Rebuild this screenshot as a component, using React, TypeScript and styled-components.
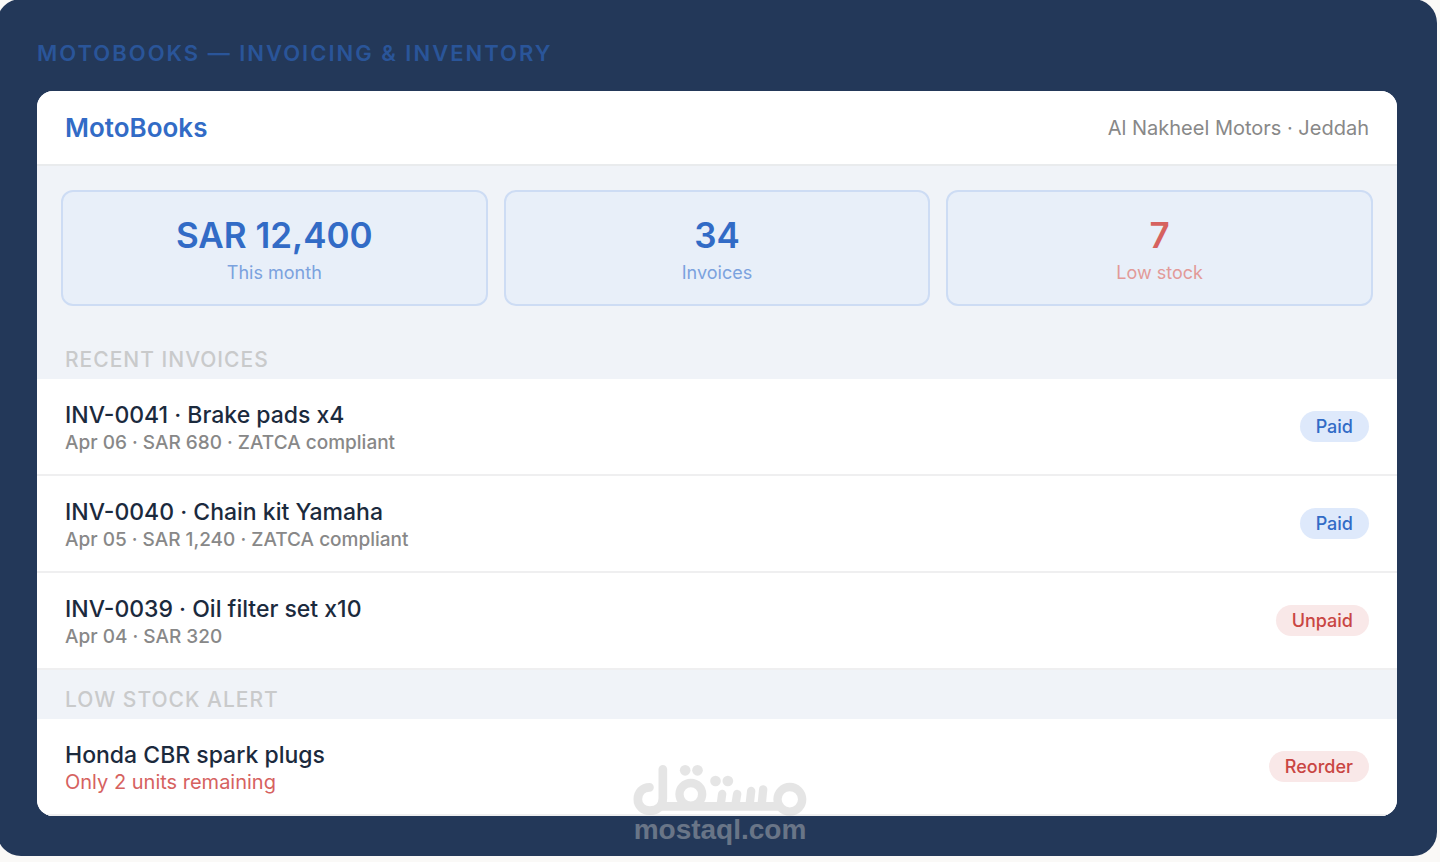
import React from "react";
import styled, { createGlobalStyle } from "styled-components";

const GlobalStyle = createGlobalStyle`
  * { box-sizing: border-box; }
  body {
    margin: 0;
    background: #faf9f7;
    font-family: Inter, "Liberation Sans", sans-serif;
    overflow-x: hidden;
  }
  h1, h2, h3, p, ul, dl, dd { margin: 0; padding: 0; }
`;

type Tone = "blue" | "red";

const Page = styled.div`
  position: relative;
  overflow: hidden;
`;

const Frame = styled.main`
  margin: -1px 3px 0 -3px;
  padding: 37px 40px 40px;
  border-radius: 24px;
  background: #233859;
`;

const Caption = styled.h1`
  margin-bottom: 21px;
  font-size: 22px;
  line-height: 34px;
  font-weight: 600;
  letter-spacing: 2px;
  text-transform: uppercase;
  color: #2a5599;
`;

const Card = styled.section`
  overflow: hidden;
  border-radius: 16px;
  background: #f0f3f8;
`;

const Header = styled.header`
  display: flex;
  align-items: center;
  justify-content: space-between;
  padding: 20px 28px;
  border-bottom: 2px solid #e9ebed;
  background: #ffffff;
`;

const Brand = styled.h2`
  font-size: 26px;
  line-height: 33px;
  font-weight: 600;
  color: #326bc6;
`;

const Shop = styled.p`
  font-size: 20px;
  line-height: 26px;
  color: #888888;
`;

const Stats = styled.dl`
  display: grid;
  grid-template-columns: repeat(3, 1fr);
  gap: 16px;
  padding: 24px;
`;

const Stat = styled.div`
  display: flex;
  flex-direction: column-reverse;
  padding: 20px 20px 16px;
  border: 2px solid #cddcf4;
  border-radius: 12px;
  background: #e8eff9;
  text-align: center;
`;

const StatValue = styled.dd<{ $tone: Tone }>`
  font-size: 35px;
  line-height: 46px;
  font-weight: 600;
  color: ${({ $tone }) => ($tone === "red" ? "#d6625f" : "#326bc6")};
`;

const StatLabel = styled.dt<{ $tone: Tone }>`
  font-size: 18px;
  line-height: 30px;
  color: ${({ $tone }) => ($tone === "red" ? "#e29a98" : "#7ba2de")};
`;

const SectionTitle = styled.h3`
  padding: 17px 28px 7px;
  font-size: 21px;
  line-height: 25px;
  font-weight: 500;
  letter-spacing: 1px;
  text-transform: uppercase;
  color: #c9cacb;
`;

const Rows = styled.ul`
  list-style: none;
`;

const Row = styled.li`
  display: flex;
  align-items: center;
  justify-content: space-between;
  padding: 19px 28px;
  border-bottom: 2px solid #efeff0;
  background: #ffffff;
`;

const RowText = styled.div`
  padding-top: 2px;
`;

const RowTitle = styled.p`
  font-size: 23px;
  line-height: 30px;
  font-weight: 500;
  color: #1b2a3d;
`;

const RowNote = styled.p`
  font-size: 19px;
  line-height: 25px;
  font-weight: 500;
  color: #888888;
`;

const AlertNote = styled(RowNote)`
  font-size: 20px;
  font-weight: 400;
  color: #d6625f;
`;

const Badge = styled.span<{ $tone: Tone }>`
  padding: 4px 16px;
  border: 0;
  border-radius: 20px;
  font-family: inherit;
  font-size: 18px;
  line-height: 23px;
  font-weight: 500;
  color: ${({ $tone }) => ($tone === "red" ? "#c94643" : "#326bc6")};
  background: ${({ $tone }) => ($tone === "red" ? "#f9e8e8" : "#dee9fb")};
`;

const Watermark = styled.div`
  position: absolute;
  left: 50%;
  bottom: 12px;
  transform: translateX(-50%);
  display: flex;
  flex-direction: column;
  align-items: center;
  opacity: 0.43;
  color: #c5c5c5;
  font-family: "Liberation Sans", Arial, sans-serif;
  font-size: 28px;
  line-height: 28px;
  font-weight: 700;
  pointer-events: none;
`;

const stats: { value: string; label: string; tone: Tone }[] = [
  { value: "SAR 12,400", label: "This month", tone: "blue" },
  { value: "34", label: "Invoices", tone: "blue" },
  { value: "7", label: "Low stock", tone: "red" },
];

const invoices: { title: string; note: string; status: string; tone: Tone }[] = [
  { title: "INV-0041 · Brake pads x4", note: "Apr 06 · SAR 680 · ZATCA compliant", status: "Paid", tone: "blue" },
  { title: "INV-0040 · Chain kit Yamaha", note: "Apr 05 · SAR 1,240 · ZATCA compliant", status: "Paid", tone: "blue" },
  { title: "INV-0039 · Oil filter set x10", note: "Apr 04 · SAR 320", status: "Unpaid", tone: "red" },
];

const MostaqlLogo = () => (
  <svg width="174" height="51" viewBox="99 75 519 153" fill="none" stroke="currentColor" strokeWidth="26" strokeLinecap="round" aria-hidden="true">
    <path d="M147 142C126 142 112 158 112 178C112 198 128 212 148 212C171 212 187 197 187 175V88" />
    <path d="M172 199H540" strokeLinecap="butt" />
    <circle cx="271" cy="163" r="34" strokeWidth="25" />
    <path d="M365 162L360 198M410 162L404 198M452 153L447 198M488 148L483 198" strokeWidth="25" />
    <circle cx="568" cy="178" r="37" strokeWidth="25" />
    <g fill="currentColor" stroke="none">
      <circle cx="254" cy="91" r="16" />
      <circle cx="291" cy="91" r="16" />
      <circle cx="345" cy="123" r="16" />
      <circle cx="382" cy="123" r="16" />
    </g>
  </svg>
);

export default function App() {
  return (
    <>
      <GlobalStyle />
      <Page>
        <Frame>
          <Caption>MotoBooks — Invoicing &amp; Inventory</Caption>
          <Card>
            <Header>
              <Brand>MotoBooks</Brand>
              <Shop>Al Nakheel Motors · Jeddah</Shop>
            </Header>
            <Stats>
              {stats.map((s) => (
                <Stat key={s.label}>
                  <StatLabel $tone={s.tone}>{s.label}</StatLabel>
                  <StatValue $tone={s.tone}>{s.value}</StatValue>
                </Stat>
              ))}
            </Stats>
            <SectionTitle>Recent invoices</SectionTitle>
            <Rows>
              {invoices.map((inv) => (
                <Row key={inv.title}>
                  <RowText>
                    <RowTitle>{inv.title}</RowTitle>
                    <RowNote>{inv.note}</RowNote>
                  </RowText>
                  <Badge $tone={inv.tone}>{inv.status}</Badge>
                </Row>
              ))}
            </Rows>
            <SectionTitle>Low stock alert</SectionTitle>
            <Rows>
              <Row>
                <RowText>
                  <RowTitle>Honda CBR spark plugs</RowTitle>
                  <AlertNote>Only 2 units remaining</AlertNote>
                </RowText>
                <Badge as="button" type="button" $tone="red">Reorder</Badge>
              </Row>
            </Rows>
          </Card>
        </Frame>
        <Watermark>
          <MostaqlLogo />
          <span>mostaql.com</span>
        </Watermark>
      </Page>
    </>
  );
}
